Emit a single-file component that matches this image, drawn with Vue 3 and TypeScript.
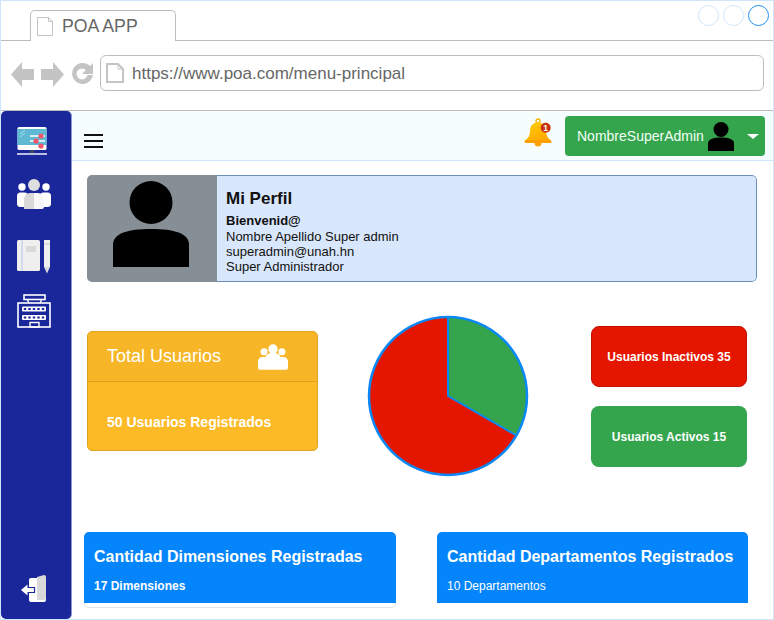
<script setup lang="ts">
const dots = [false, false, true]

const profileLines = ['Nombre Apellido Super admin', 'superadmin@unah.hn', 'Super Administrador']
</script>

<template>
  <div class="window">
    <header class="tabs">
      <div class="tab">
        <svg class="doc" width="16" height="19" viewBox="0 0 16 19">
          <path d="M.5.5h11l4 4v14H.5z" fill="#fff" stroke="#c4c4c4" />
          <path d="M11.5.5v4h4" fill="none" stroke="#c4c4c4" />
        </svg>
        <span>POA APP</span>
      </div>
      <div class="dots">
        <span v-for="(on, i) in dots" :key="i" class="dot" :class="{ on }"></span>
      </div>
    </header>

    <div class="toolbar">
      <svg class="nav" width="84" height="28" viewBox="0 0 84 28">
        <path d="M0 14.5 11 2v7h12v11H11v7z" fill="#c4c4c4" />
        <path d="M53 14.5 42 2v7H30v11h12v7z" fill="#c4c4c4" />
        <path d="M82 15a10.5 10.5 0 1 1-3-9l3-3v11H71l4-4a5.5 5.5 0 1 0 1.5 5z" fill="#c4c4c4" />
      </svg>
      <div class="url">
        <svg width="18" height="20" viewBox="0 0 18 20">
          <path d="M1 1h11l5 5v13H1z" fill="#fff" stroke="#c4c4c4" stroke-width="2" />
          <path d="M12 1v5h5" fill="none" stroke="#c4c4c4" />
        </svg>
        <span>https://www.poa.com/menu-principal</span>
      </div>
    </div>

    <div class="body">
      <aside class="sidebar">
        <div class="side-icons">
          <svg class="ico-monitor" width="30" height="30" viewBox="0 0 30 30">
            <rect x="0.5" y="1" width="29" height="23" rx="1.5" fill="#fff" />
            <rect x="0.5" y="3" width="29" height="16" fill="#5fb9d3" />
            <path d="M3 8l5-4M3 11l5-4" stroke="#a6dbe8" />
            <path d="M13 10h15M13 15h15M13 20h15" stroke="#fff" stroke-width="1.5" />
            <circle cx="24" cy="10" r="2.6" fill="#f0556a" />
            <circle cx="19" cy="15" r="2.6" fill="#f0556a" />
            <circle cx="24" cy="20" r="2.6" fill="#f0556a" />
            <path d="M12 27l1.500-3h3l1.500 3z" fill="#3a4660" />
            <path d="M0 28h30" stroke="#fff" stroke-width="1.4" />
          </svg>
          <svg class="ico-people" width="34" height="30" viewBox="0 0 34 30">
            <circle cx="5" cy="8" r="3.7" fill="#fff" />
            <circle cx="29" cy="8" r="3.7" fill="#fff" />
            <rect x="0" y="13.5" width="11" height="14.5" rx="3.5" fill="#fff" />
            <rect x="23" y="13.5" width="11" height="14.5" rx="3.5" fill="#fff" />
            <circle cx="17" cy="6" r="6" fill="#dedede" />
            <path d="M7 30v-10a6 6 0 0 1 6-6h4v16z" fill="#d9d9d9" />
            <path d="M17 14h4a6 6 0 0 1 6 6v8a2 2 0 0 1-2 2h-8z" fill="#f7f7f7" />
          </svg>
          <svg class="ico-note" width="33" height="34" viewBox="0 0 33 34">
            <rect x="0" y="0" width="23" height="31" rx="1.5" fill="#efefef" />
            <path d="M5 0v31" stroke="#b9c4e8" />
            <rect x="9" y="6" width="10" height="6" rx="1" fill="#d9d9d9" />
            <rect x="27" y="0" width="6" height="27" fill="#efefef" />
            <path d="M27 27h6l-3 6.5z" fill="#d9d9d9" />
            <path d="M27 4h6" stroke="#c9c9c9" />
          </svg>
          <svg class="ico-keys" width="34" height="34" viewBox="0 0 34 34" fill="none" stroke="#fff">
            <rect x="7" y="1" width="21" height="4.5" stroke-width="1.6" />
            <path d="M10.5 6l1.500 3M24.500 6l-1.500 3" stroke-width="1.4" />
            <rect x="1" y="9" width="32" height="24" stroke-width="1.6" />
            <rect x="5" y="12.5" width="24" height="5" rx="1" fill="#fff" stroke="none" />
            <rect x="5" y="21" width="24" height="5" rx="1" fill="#fff" stroke="none" />
            <path d="M8 14v2M12.500 14v2M17 14v2M21.500 14v2M26 14v2M8 22.500v2M12.500 22.500v2M17 22.500v2M21.500 22.500v2M26 22.500v2" stroke="#1a279b" stroke-width="2.4" />
            <rect x="13" y="28.5" width="9" height="4.5" stroke-width="1.4" />
          </svg>
        </div>
        <svg class="ico-exit" width="28" height="28" viewBox="0 0 28 28">
          <rect x="8" y="3" width="17" height="24" rx="2" fill="#fff" />
          <path d="M16 2l7-2a2 2 0 0 1 2 2v21a2 2 0 0 1-2 2h-2l-5 0z" fill="#d9d9d9" />
          <path d="M6 12.500h7.500v5H6" fill="#fff" stroke="#1a279b" stroke-width="1.2" />
          <path d="M0 15l6.500-5.500v11z" fill="#fff" />
        </svg>
      </aside>

      <main class="main">
        <div class="topbar">
          <button class="burger" type="button"><i></i><i></i><i></i></button>
          <svg class="bell" width="28" height="30" viewBox="0 0 28 30">
            <defs>
              <linearGradient id="bellFill" x1="0" y1="0" x2="0.6" y2="1">
                <stop offset="0" stop-color="#ffd000" />
                <stop offset="1" stop-color="#ffa600" />
              </linearGradient>
            </defs>
            <circle cx="14" cy="3" r="2" fill="none" stroke="#f7b500" stroke-width="1.4" />
            <path d="M14 4.500C8.500 4.500 6 8.500 6 13c0 4.500-2 7.500-5 9.500V25h26v-2.500C24 20.500 22 17.500 22 13c0-4.500-2.500-8.500-8-8.500z" fill="url(#bellFill)" />
            <rect x="0.5" y="22" width="27" height="3" rx="1.5" fill="#ffa000" />
            <path d="M10.500 25h7a3.500 3.500 0 0 1-7 0z" fill="#ffa000" />
            <circle cx="21.7" cy="9.7" r="5" fill="#c9310f" />
            <text x="21.7" y="12.700" text-anchor="middle" class="bell-num">1</text>
          </svg>
          <div class="user">
            <span>NombreSuperAdmin</span>
            <svg width="26" height="29" viewBox="0 0 26 29">
              <circle cx="13" cy="7.5" r="7.5" />
              <path d="M0 29v-8c0-3.500 5-5.500 13-5.500s13 2 13 5.500v8z" />
            </svg>
            <i class="caret"></i>
          </div>
        </div>

        <section class="profile">
          <div class="avatar">
            <svg width="76" height="86" viewBox="0 0 76 86">
              <circle cx="38" cy="21.5" r="21.5" />
              <path d="M0 86V64c0-12 15-16 38-16s38 4 38 16v22z" />
            </svg>
          </div>
          <div class="profile-info">
            <h2>Mi Perfil</h2>
            <strong>Bienvenid@</strong>
            <p v-for="line in profileLines" :key="line">{{ line }}</p>
          </div>
        </section>

        <section class="stats">
          <div class="total">
            <div class="total-head">
              <span>Total Usuarios</span>
              <svg width="30" height="26" viewBox="0 0 32 27" fill="#fff">
                <circle cx="16" cy="5" r="5" />
                <circle cx="6.5" cy="8" r="3.8" />
                <circle cx="25.5" cy="8" r="3.8" />
                <path d="M0 25v-7a5 5 0 0 1 4-4.500h24a5 5 0 0 1 4 4.500v7a2 2 0 0 1-2 2H2a2 2 0 0 1-2-2z" />
                <path d="M8 14a8 5 0 0 1 16 0z" />
              </svg>
            </div>
            <div class="total-body">50 Usuarios Registrados</div>
          </div>

          <svg class="pie" width="164" height="164" viewBox="0 0 164 164">
            <circle cx="82" cy="81" r="79" fill="#e51600" />
            <path d="M82 81V2a79 79 0 0 1 68.400 118.500z" fill="#34a54d" />
            <path d="M82 2v79l68.400 39.500" fill="none" stroke="#0a88f5" stroke-width="2" />
            <circle cx="82" cy="81" r="79" fill="none" stroke="#0a88f5" stroke-width="2.5" />
          </svg>

          <div class="pills">
            <div class="pill red">Usuarios Inactivos 35</div>
            <div class="pill green">Usuarios Activos 15</div>
          </div>
        </section>

        <section class="counts">
          <div class="count dims">
            <div class="count-fill">
              <h3>Cantidad Dimensiones Registradas</h3>
              <p>17 Dimensiones</p>
            </div>
          </div>
          <div class="count deps">
            <div class="count-fill">
              <h3>Cantidad Departamentos Registrados</h3>
              <p class="thin">10 Departamentos</p>
            </div>
          </div>
        </section>
      </main>
    </div>
  </div>
</template>

<style scoped>
.window {
  width: 774px;
  height: 620px;
  box-sizing: border-box;
  border: 1px solid #cfe5fb;
  background: #fff;
  font-family: "Liberation Sans", Arial, sans-serif;
  display: flex;
  flex-direction: column;
  overflow: hidden;
}

.tabs {
  height: 40px;
  flex: none;
  box-sizing: border-box;
  border-bottom: 1px solid #bdbdbd;
  padding: 9px 4px 0 29px;
  display: flex;
  justify-content: space-between;
  align-items: flex-start;
}

.tab {
  width: 146px;
  height: 31px;
  box-sizing: border-box;
  border: 1px solid #bdbdbd;
  border-bottom: none;
  border-radius: 5px 5px 0 0;
  background: #fff;
  padding: 6px 0 0 6px;
  display: flex;
  align-items: flex-start;
  gap: 9px;
  color: #666;
  font-size: 17.7px;
  line-height: 20px;
}

.tab span {
  margin-top: -1px;
}

.dots {
  display: flex;
  gap: 4px;
  margin-top: -5px;
}

.dot {
  width: 21px;
  height: 21px;
  box-sizing: border-box;
  border: 1px solid #cfe5fb;
  border-radius: 50%;
}

.dot.on {
  border-color: #1e90ef;
}

.toolbar {
  height: 70px;
  flex: none;
  box-sizing: border-box;
  border-bottom: 1px solid #bdbdbd;
  padding: 14px 9px 0 10px;
  display: flex;
  align-items: flex-start;
  gap: 5px;
}

.nav {
  margin-top: 5px;
}

.url {
  flex: 1;
  height: 36px;
  box-sizing: border-box;
  border: 1px solid #bdbdbd;
  border-radius: 6px;
  padding: 0 0 0 5px;
  display: flex;
  align-items: center;
  gap: 8px;
  color: #666;
  font-size: 17px;
}

.url span {
  margin-top: 1px;
}

.body {
  flex: 1;
  min-height: 0;
  display: flex;
}

.sidebar {
  width: 71px;
  flex: none;
  box-sizing: border-box;
  background: #1a279b;
  border-right: 1px solid #8f96cc;
  border-radius: 5px;
  padding: 15px 0 16px 16px;
  display: flex;
  flex-direction: column;
  justify-content: space-between;
  align-items: flex-start;
}

.side-icons {
  display: flex;
  flex-direction: column;
  align-items: flex-start;
}

.ico-people {
  margin-top: 23px;
}

.ico-note {
  margin-top: 31px;
}

.ico-keys {
  margin-top: 20px;
}

.ico-exit {
  margin-left: 4px;
}

.main {
  flex: 1;
  min-width: 0;
}

.topbar {
  height: 50px;
  box-sizing: border-box;
  background: #f5fdff;
  border-bottom: 1px solid #cfe5fb;
  padding: 5px 8px 0 12px;
  display: flex;
  align-items: flex-start;
}

.burger {
  width: 19px;
  margin: 18px auto 0 0;
  padding: 0;
  border: 0;
  background: none;
  display: flex;
  flex-direction: column;
  gap: 4px;
}

.burger i {
  height: 2px;
  background: #111;
}

.bell {
  margin: 2px 13px 0 0;
}

.bell-num {
  fill: #fff;
  font-size: 8.5px;
  font-weight: 700;
}

.user {
  width: 200px;
  height: 40px;
  box-sizing: border-box;
  background: #34a54d;
  border-radius: 4px;
  padding: 0 6px 0 12px;
  display: flex;
  align-items: center;
  color: #f2fff5;
  font-size: 14px;
}

.user svg {
  margin-left: 4px;
}

.caret {
  margin-left: 13px;
  border: 6px solid transparent;
  border-top: 5px solid #fff;
  border-bottom: 0;
}

.profile {
  margin: 14px 16px 0 15px;
  height: 107px;
  display: flex;
  border-radius: 5px;
  overflow: hidden;
}

.avatar {
  width: 130px;
  flex: none;
  background: #868e96;
  display: flex;
  justify-content: center;
  padding: 6px 3px 0 0;
  box-sizing: border-box;
}

.profile-info {
  flex: 1;
  box-sizing: border-box;
  background: #d8e7fb;
  border: 1px solid #6c8ebf;
  border-left: none;
  border-radius: 0 5px 5px 0;
  padding: 13px 0 0 9px;
  color: #111;
  font-size: 13px;
  line-height: 15px;
}

.profile-info h2 {
  margin: 0 0 4px;
  font-size: 17px;
  line-height: 20px;
}

.profile-info strong {
  display: block;
  margin-bottom: 1px;
}

.profile-info p {
  margin: 0;
}

.stats {
  margin: 33px 17px 0 15px;
  display: flex;
  align-items: flex-start;
}

.total {
  width: 231px;
  height: 120px;
  margin-top: 16px;
  flex: none;
  box-sizing: border-box;
  border: 1px solid #dda321;
  border-radius: 5px;
  background: #fdba27;
  color: #fff;
  overflow: hidden;
}

.total-head {
  height: 50px;
  box-sizing: border-box;
  background: #f6b627;
  border-bottom: 1px solid #dda321;
  padding: 0 29px 0 19px;
  display: flex;
  justify-content: space-between;
  align-items: center;
  font-size: 18px;
}

.total-body {
  padding: 32px 0 0 19px;
  font-size: 14px;
  font-weight: 700;
  line-height: 16px;
}

.pie {
  margin-left: 48px;
  flex: none;
}

.pills {
  margin: 11px 0 0 61px;
  display: flex;
  flex-direction: column;
  gap: 19px;
}

.pill {
  width: 156px;
  height: 61px;
  box-sizing: border-box;
  border-radius: 8px;
  color: #fff;
  font-size: 12px;
  font-weight: 700;
  display: flex;
  align-items: center;
  justify-content: center;
}

.pill.red {
  background: #e51600;
  border: 1px solid #c21200;
}

.pill.green {
  background: #34a54d;
}

.counts {
  margin: 53px 0 0 12px;
  display: flex;
  align-items: flex-start;
  gap: 41px;
}

.count {
  width: 312px;
  flex: none;
  border-radius: 5px;
}

.dims {
  height: 76px;
  box-sizing: border-box;
  border: 1px solid #dde3ea;
  border-top: none;
}

.deps {
  width: 311px;
}

.count-fill {
  height: 71px;
  box-sizing: border-box;
  background: #0585fb;
  border-radius: 5px 5px 0 0;
  padding: 15px 0 0 10px;
  color: #fff;
}

.dims .count-fill {
  margin: 0 -1px;
}

.count-fill h3 {
  margin: 0 0 12px;
  font-size: 16px;
  line-height: 20px;
}

.count-fill p {
  margin: 0;
  font-size: 12px;
  font-weight: 700;
  line-height: 15px;
}

.count-fill p.thin {
  font-weight: 400;
}
</style>

<style>
html,
body {
  margin: 0;
  background: #fff;
}
</style>
